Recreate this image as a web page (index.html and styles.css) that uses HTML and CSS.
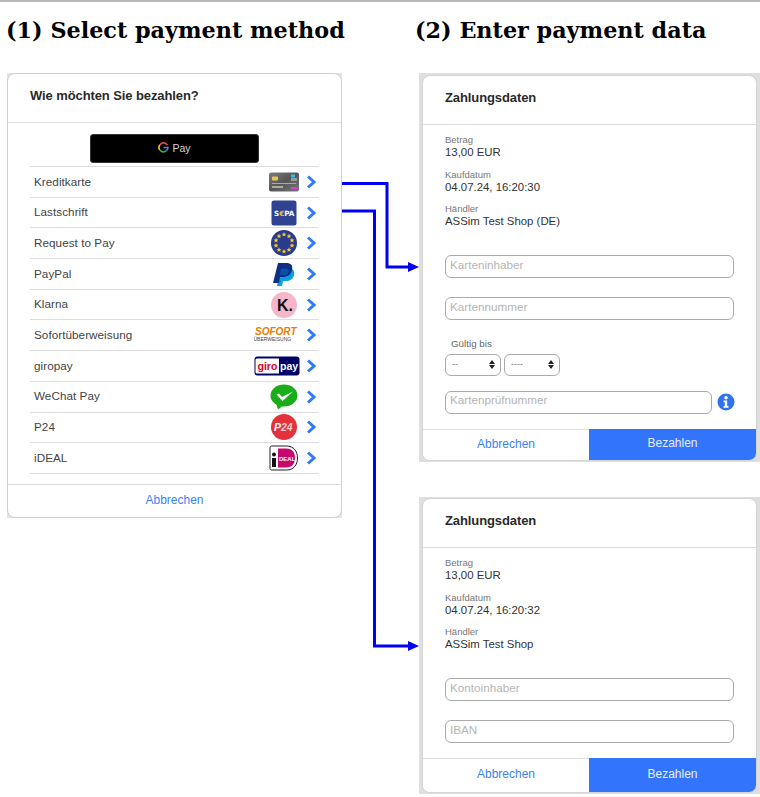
FILE: index.html
```html
<!DOCTYPE html>
<html lang="en">
<head>
  <meta charset="UTF-8">
  <meta name="viewport" content="width=device-width, initial-scale=1.0">
  <title>Payment flow</title>
  <link rel="stylesheet" href="styles.css">
</head>
<body>

<div class="top-rule"></div>

<div class="page">
  <!-- Step 1 -->
  <section class="col col-left">
    <h2 class="step-title">(1) Select payment method</h2>

    <div class="shot-methods">
    <div class="card card-methods">
      <div class="card-head">Wie möchten Sie bezahlen?</div>
      <div class="methods-body">
        <button class="gpay-btn">
          <svg class="gpay-g" width="11" height="11" viewBox="0 0 12 12">
            <path d="M10.2 3.3A4.8 4.8 0 0 0 2 3.2" fill="none" stroke="#ea4335" stroke-width="1.8"/>
            <path d="M2 3.2A4.8 4.8 0 0 0 2 8.8" fill="none" stroke="#fbbc04" stroke-width="1.8"/>
            <path d="M2 8.8A4.8 4.8 0 0 0 9.4 9.2" fill="none" stroke="#34a853" stroke-width="1.8"/>
            <path d="M9.4 9.2A4.8 4.8 0 0 0 10.8 6H6" fill="none" stroke="#4285f4" stroke-width="1.8"/>
          </svg>
          <span>Pay</span>
        </button>

        <ul class="method-list">
          <li class="method">
            <span class="method-name">Kreditkarte</span>
            <svg class="method-logo" viewBox="0 0 46 26">
              <defs>
                <linearGradient id="cardGrad" x1="0" y1="0" x2="1" y2="1">
                  <stop offset="0" stop-color="#7d7d7d"/>
                  <stop offset="0.5" stop-color="#555555"/>
                  <stop offset="1" stop-color="#777777"/>
                </linearGradient>
              </defs>
              <rect x="15" y="3.500" width="30" height="19" rx="2" fill="url(#cardGrad)"/>
              <rect x="18" y="7.500" width="6" height="4" rx="1" fill="#eec44f"/>
              <rect x="37" y="5.500" width="4" height="3" fill="#27c3e8"/>
              <rect x="37" y="9" width="6" height="3" fill="#999999"/>
              <rect x="18" y="14" width="24" height="1" fill="#aaaaaa"/>
              <rect x="18" y="17" width="11" height="2" fill="#aaaaaa"/>
              <rect x="37" y="18" width="6" height="2" fill="#e03ae0"/>
            </svg>
            <svg class="chevron" viewBox="0 0 10 14"><path d="M2 1.500L8 7L2 12.500"/></svg>
          </li>
          <li class="method">
            <span class="method-name">Lastschrift</span>
            <svg class="method-logo" viewBox="0 0 46 26">
              <rect x="17.500" y="0.500" width="25" height="25" rx="2.500" fill="#2f4392"/>
              <text class="logo-text sepa-text" x="20" y="16">S<tspan fill="#f5c526">€</tspan>PA</text>
            </svg>
            <svg class="chevron" viewBox="0 0 10 14"><path d="M2 1.500L8 7L2 12.500"/></svg>
          </li>
          <li class="method">
            <span class="method-name">Request to Pay</span>
            <svg class="method-logo" viewBox="0 0 46 26">
              <defs>
                <path id="star" d="M0-2.600L.7-.8 2.500-.8 1.100.3 1.600 2.100 0 1 -1.600 2.100 -1.100.3 -2.500-.8 -.7-.8z" fill="#f7d41c"/>
              </defs>
              <circle cx="30" cy="13" r="13" fill="#2b3a8c"/>
              <use href="#star" x="30" y="4.500"/>
              <use href="#star" x="35" y="6.200"/>
              <use href="#star" x="38" y="10.400"/>
              <use href="#star" x="38" y="15.600"/>
              <use href="#star" x="35" y="19.800"/>
              <use href="#star" x="30" y="21.500"/>
              <use href="#star" x="25" y="19.800"/>
              <use href="#star" x="22" y="15.600"/>
              <use href="#star" x="22" y="10.400"/>
              <use href="#star" x="25" y="6.200"/>
            </svg>
            <svg class="chevron" viewBox="0 0 10 14"><path d="M2 1.500L8 7L2 12.500"/></svg>
          </li>
          <li class="method">
            <span class="method-name">PayPal</span>
            <svg class="method-logo" viewBox="0 0 46 26">
              <path d="M26 7h8c5 0 7 3 6 7-1 4-4 6-8 6h-3l-1 5h-5z" fill="#0a9fe0"/>
              <path d="M24 2h8c5 0 7 2 6 7-1 5-5 7-9 7h-3l-1 6h-6z" fill="#0c2f85"/>
              <path d="M27 7.500h5c2 0 3 1 2.700 3-.5 2-2 3.500-4 3.500h-5z" fill="#0a4ea6"/>
            </svg>
            <svg class="chevron" viewBox="0 0 10 14"><path d="M2 1.500L8 7L2 12.500"/></svg>
          </li>
          <li class="method">
            <span class="method-name">Klarna</span>
            <svg class="method-logo" viewBox="0 0 46 26">
              <circle cx="30" cy="13" r="13" fill="#f4b6c8"/>
              <text class="logo-text klarna-text" x="23" y="18.500">K.</text>
            </svg>
            <svg class="chevron" viewBox="0 0 10 14"><path d="M2 1.500L8 7L2 12.500"/></svg>
          </li>
          <li class="method">
            <span class="method-name">Sofortüberweisung</span>
            <svg class="method-logo" viewBox="0 0 46 26">
              <text class="logo-text sofort-text" x="1" y="13">SOFORT</text>
              <text class="logo-text sofort-sub" x="-0.500" y="18.500">ÜBERWEISUNG</text>
            </svg>
            <svg class="chevron" viewBox="0 0 10 14"><path d="M2 1.500L8 7L2 12.500"/></svg>
          </li>
          <li class="method">
            <span class="method-name">giropay</span>
            <svg class="method-logo" viewBox="0 0 46 26">
              <rect x="0.500" y="3.500" width="45" height="19" rx="3" fill="#000268"/>
              <path d="M3 5.500h22v15H3a1.500 1.500 0 0 1-1.500-1.500V7A1.500 1.500 0 0 1 3 5.500z" fill="#fff"/>
              <text class="logo-text giro-text" x="3.500" y="16.500">giro</text>
              <text class="logo-text pay-text" x="26" y="16.500">pay</text>
            </svg>
            <svg class="chevron" viewBox="0 0 10 14"><path d="M2 1.500L8 7L2 12.500"/></svg>
          </li>
          <li class="method">
            <span class="method-name">WeChat Pay</span>
            <svg class="method-logo" viewBox="0 0 46 26">
              <ellipse cx="30" cy="11.500" rx="13.500" ry="11" fill="#1aad19"/>
              <path d="M22 19l2 6.500 5-4z" fill="#1aad19"/>
              <path d="M22.500 10.500l2.500-1 3 3.500L39 7.500l-10.500 9.500z" fill="#fff"/>
            </svg>
            <svg class="chevron" viewBox="0 0 10 14"><path d="M2 1.500L8 7L2 12.500"/></svg>
          </li>
          <li class="method">
            <span class="method-name">P24</span>
            <svg class="method-logo" viewBox="0 0 46 26">
              <circle cx="30" cy="13" r="13" fill="#e2323c"/>
              <text class="logo-text p24-text" x="20" y="17">P<tspan fill="#e8c9ca">24</tspan></text>
            </svg>
            <svg class="chevron" viewBox="0 0 10 14"><path d="M2 1.500L8 7L2 12.500"/></svg>
          </li>
          <li class="method">
            <span class="method-name">iDEAL</span>
            <svg class="method-logo" viewBox="0 0 46 26">
              <path d="M17.500 1h15c7 0 11 5 11 12s-4 12-11 12h-15a1.500 1.500 0 0 1-1.500-1.500v-21A1.500 1.500 0 0 1 17.500 1z" fill="#fff" stroke="#222" stroke-width="1"/>
              <path d="M24 3.500h8.500c5.500 0 8.500 4 8.500 9.500s-3 9.500-8.500 9.500H24z" fill="#c9066d"/>
              <rect x="18" y="13" width="4" height="9" fill="#111"/>
              <circle cx="20" cy="9.500" r="2" fill="#111"/>
              <text class="logo-text ideal-text" x="25" y="15.500">DEAL</text>
            </svg>
            <svg class="chevron" viewBox="0 0 10 14"><path d="M2 1.500L8 7L2 12.500"/></svg>
          </li>
        </ul>
      </div>
      <div class="card-foot"><a class="foot-link">Abbrechen</a></div>
    </div>
    </div>
  </section>

  <!-- Step 2 -->
  <section class="col col-right">
    <h2 class="step-title">(2) Enter payment data</h2>

    <div class="shot shot-card">
      <div class="card card-form">
        <div class="card-head">Zahlungsdaten</div>
        <div class="details">
          <div class="detail"><div class="detail-label">Betrag</div><div class="detail-value">13,00 EUR</div></div>
          <div class="detail"><div class="detail-label">Kaufdatum</div><div class="detail-value">04.07.24, 16:20:30</div></div>
          <div class="detail"><div class="detail-label">Händler</div><div class="detail-value">ASSim Test Shop (DE)</div></div>
        </div>
        <div class="form">
          <input class="field" placeholder="Karteninhaber">
          <input class="field" placeholder="Kartennummer">
          <div class="expiry-label">Gültig bis</div>
          <div class="expiry">
            <div class="select-box select-month">--<span class="updown"></span></div>
            <div class="select-box select-year">----<span class="updown"></span></div>
          </div>
          <div class="cvc-row">
            <input class="field field-cvc" placeholder="Kartenprüfnummer">
            <svg class="info" width="18" height="18" viewBox="0 0 18 18">
              <circle cx="9" cy="9" r="8.500" fill="#2f73ee"/>
              <circle cx="9" cy="4.800" r="1.700" fill="#fff"/>
              <path d="M6.500 7.500h3.700v5.500h1.300v1.700h-5v-1.700h1.300V9.200H6.500z" fill="#fff"/>
            </svg>
          </div>
        </div>
        <div class="actions">
          <button class="action action-cancel">Abbrechen</button>
          <button class="action action-pay">Bezahlen</button>
        </div>
      </div>
    </div>

    <div class="shot shot-bank">
      <div class="card card-form">
        <div class="card-head">Zahlungsdaten</div>
        <div class="details">
          <div class="detail"><div class="detail-label">Betrag</div><div class="detail-value">13,00 EUR</div></div>
          <div class="detail"><div class="detail-label">Kaufdatum</div><div class="detail-value">04.07.24, 16:20:32</div></div>
          <div class="detail"><div class="detail-label">Händler</div><div class="detail-value">ASSim Test Shop</div></div>
        </div>
        <div class="form form-bank">
          <input class="field" placeholder="Kontoinhaber">
          <input class="field" placeholder="IBAN">
        </div>
        <div class="actions">
          <button class="action action-cancel">Abbrechen</button>
          <button class="action action-pay">Bezahlen</button>
        </div>
      </div>
    </div>
  </section>
</div>

<!-- Connecting arrows -->
<svg class="arrows" width="760" height="797" viewBox="0 0 760 797">
  <path d="M342 183.500H387V267H410" fill="none" stroke="#0000f5" stroke-width="3"/>
  <path d="M408 262L419 267L408 272z" fill="#0000f5"/>
  <path d="M342 211H374.500V646H410" fill="none" stroke="#0000f5" stroke-width="3"/>
  <path d="M408 641L419 646L408 651z" fill="#0000f5"/>
</svg>

</body>
</html>
```

FILE: styles.css
```css
* {
  margin: 0;
  padding: 0;
  box-sizing: border-box;
}
html, body {
  height: 797px;
  overflow: hidden;
}
body {
  position: relative;
  background: #ffffff;
  font-family: "Liberation Sans", Arial, sans-serif;
  color: #333333;
}
.top-rule {
  height: 2px;
  background: #b9b9b9;
}
.page {
  display: flex;
}
.col-left {
  width: 415px;
  padding-left: 6px;
}
.col-right {
  width: 345px;
}
.step-title {
  font-family: "DejaVu Serif", serif;
  font-size: 22.300px;
  font-weight: bold;
  line-height: 28px;
  height: 71px;
  padding-top: 14px;
  color: #000000;
  white-space: nowrap;
}

/* Shared card */
.card {
  background: #ffffff;
  border: 1px solid #d0d0d0;
  border-radius: 8px;
  overflow: hidden;
}
.card-head {
  height: 49px;
  padding: 0 22px;
  line-height: 44px;
  font-size: 13px;
  font-weight: bold;
  letter-spacing: -0.1px;
  color: #2a2a2a;
  border-bottom: 1px solid #dddddd;
}

/* Step 1 card */
.shot-methods {
  width: 335px;
  margin-left: 1px;
  background: #e4e4e4;
}
.methods-body {
  padding: 11px 22px 10px;
}
.gpay-btn {
  display: flex;
  align-items: center;
  justify-content: center;
  gap: 3px;
  width: 169px;
  height: 29px;
  margin: 0 0 3px 60px;
  padding-bottom: 2px;
  background: #000000;
  border: 1px solid #333333;
  border-radius: 3px;
  color: #d8d8d8;
  font-family: "Liberation Sans", sans-serif;
  font-size: 10.500px;
}
.method-list {
  list-style: none;
  border-bottom: 1px solid #dddddd;
}
.method {
  display: flex;
  align-items: center;
  height: 30.700px;
  padding: 0 3px 0 4px;
  border-top: 1px solid #dddddd;
}
.method-name {
  flex: 1;
  font-size: 11.700px;
  letter-spacing: 0.05px;
  color: #444444;
  margin-top: -1.500px;
}
.method-logo {
  width: 46px;
  height: 26px;
  margin-right: 6px;
}
.chevron {
  width: 10px;
  height: 14px;
  fill: none;
  stroke: #2f7bff;
  stroke-width: 3;
}
.card-foot {
  height: 33px;
  border-top: 1px solid #dddddd;
  text-align: center;
  line-height: 27px;
}
.foot-link {
  font-size: 12px;
  color: #3f80f5;
}

/* Logo text */
.logo-text {
  font-family: "Liberation Sans", sans-serif;
  font-weight: bold;
}
.sepa-text {
  font-family: "DejaVu Sans", sans-serif;
  font-size: 7.200px;
  fill: #ffffff;
}
.klarna-text {
  font-size: 16px;
  fill: #111111;
}
.sofort-text {
  font-size: 10px;
  font-style: italic;
  fill: #e87d00;
}
.sofort-sub {
  font-size: 5px;
  font-weight: normal;
  fill: #444444;
}
.giro-text {
  font-size: 10.500px;
  fill: #e2001a;
}
.pay-text {
  font-size: 10.500px;
  fill: #ffffff;
}
.p24-text {
  font-size: 10.500px;
  font-style: italic;
  fill: #ffffff;
}
.ideal-text {
  font-size: 6px;
  fill: #ffffff;
}

/* Step 2 screenshots */
.shot {
  margin-left: 4px;
  padding: 2px 3px 0;
  background: #dfdfdf;
}
.shot-card {
  height: 389px;
}
.shot-bank {
  margin-top: 35px;
  padding-top: 1px;
  height: 297px;
}
.card-form {
  width: 335px;
  border-color: #d4d4d4;
}
.details {
  padding: 9px 22px 0;
  height: 130px;
}
.detail {
  margin-bottom: 10.700px;
}
.detail-label {
  font-size: 9.500px;
  line-height: 12px;
  color: #777777;
}
.detail-value {
  font-size: 11.400px;
  line-height: 12px;
  color: #333333;
}
.form {
  display: flex;
  flex-direction: column;
  padding: 0 22px;
  height: 174px;
}
.form-bank {
  height: 80px;
}
.field {
  display: block;
  width: 289px;
  height: 23px;
  flex: none;
  margin-bottom: 19px;
  padding: 0 4px 4px;
  background: #ffffff;
  border: 1px solid #aaaaaa;
  border-radius: 6px;
  font-family: "Liberation Sans", sans-serif;
  font-size: 11.700px;
  outline: none;
}
.field::placeholder {
  color: #b5b5b5;
  opacity: 1;
}
.expiry-label {
  margin: -2px 0 4px 6px;
  font-size: 9.800px;
  line-height: 13px;
  color: #666666;
}
.expiry {
  display: flex;
  gap: 3px;
  margin-bottom: 15px;
}
.select-box {
  position: relative;
  width: 56px;
  height: 22px;
  padding-left: 6px;
  border: 1px solid #aaaaaa;
  border-radius: 6px;
  font-size: 9px;
  line-height: 18px;
  color: #777777;
}
.updown::before,
.updown::after {
  content: "";
  position: absolute;
  right: 5px;
  border-left: 3px solid transparent;
  border-right: 3px solid transparent;
}
.updown::before {
  top: 5px;
  border-bottom: 4px solid #222222;
}
.updown::after {
  top: 10px;
  border-top: 4px solid #222222;
}
.cvc-row {
  display: flex;
  align-items: center;
  justify-content: space-between;
  width: 290px;
}
.field-cvc {
  width: 267px;
  margin-bottom: 0;
  padding-bottom: 6px;
}
.info {
  margin-top: -1px;
}
.actions {
  display: flex;
  height: 31px;
}
.shot-bank .actions {
  height: 34px;
}
.action {
  flex: 1;
  padding-bottom: 3px;
  border: none;
  background: #ffffff;
  font-family: "Liberation Sans", sans-serif;
  font-size: 12px;
  color: #3f80f5;
}
.action-cancel {
  flex: none;
  width: 166px;
  border-top: 1px solid #dddddd;
}
.action-pay {
  background: #3274fb;
  color: #e8eefc;
}

/* Arrows lie over everything */
.arrows {
  position: absolute;
  top: 0;
  left: 0;
  pointer-events: none;
}
```
